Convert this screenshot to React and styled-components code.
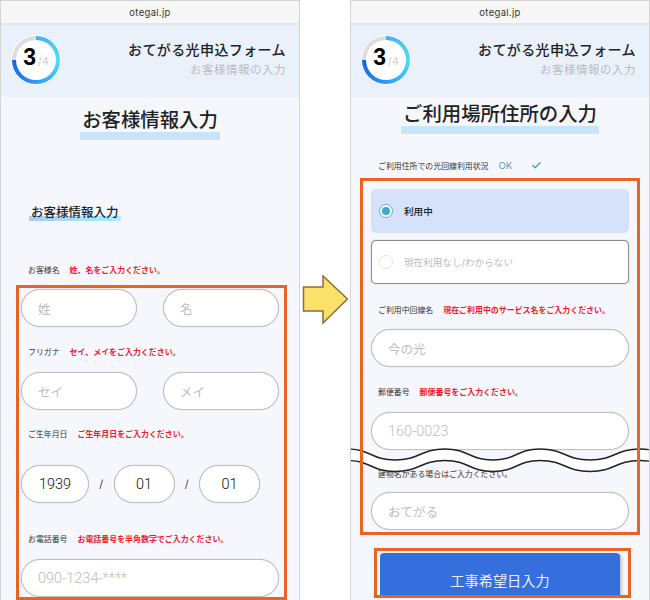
import React from "react";
import styled, { createGlobalStyle } from "styled-components";
import { Check } from "lucide-react";

const GlobalStyle = createGlobalStyle`
  html, body {
    margin: 0;
    padding: 0;
    background: #fff;
  }
  * {
    box-sizing: border-box;
  }
`;

const FONT = `Inter, "Noto Sans CJK JP", sans-serif`;

const Page = styled.div`
  width: 650px;
  height: 600px;
  display: flex;
  align-items: center;
  overflow: hidden;
  font-family: ${FONT};
  color: #222;
`;

const Phone = styled.div`
  position: relative;
  width: 300px;
  height: 600px;
  flex: none;
  overflow: hidden;
  background: #f6f7fc;
  border: 1px solid #d4d4d4;
  border-bottom: 0;
`;

const ArrowColumn = styled.div`
  width: 50px;
  flex: none;
  display: flex;
  justify-content: center;
`;

const BrowserBar = styled.div`
  height: 24px;
  display: flex;
  align-items: center;
  justify-content: center;
  background: #f7f7f7;
  border-bottom: 2px solid #e1e5ec;
  font-size: 9.5px;
  letter-spacing: 0.3px;
  color: #333;
`;

const Header = styled.header`
  height: 72px;
  padding: 10px 13px 0 10px;
  display: flex;
  justify-content: space-between;
  background: #eaf1fb;
`;

const Ring = styled.div`
  width: 50px;
  height: 50px;
  padding: 4px;
  border-radius: 50%;
  display: flex;
  background: conic-gradient(
    #4aaef2 0%,
    #50dcff 25%,
    #2f9af5 50%,
    #1261ea 75%,
    #dedede 75%,
    #dedede 100%
  );
  border: 1px solid #fff;
`;

const RingInner = styled.div`
  flex: 1;
  border-radius: 50%;
  background: #fff;
  display: flex;
  align-items: baseline;
  justify-content: center;
  line-height: 35px;
`;

const RingNumber = styled.span`
  font-family: "Liberation Sans", sans-serif;
  font-size: 23px;
  font-weight: 700;
  color: #000;
`;

const RingTotal = styled.span`
  font-size: 10.5px;
  color: #ccc;
  margin-left: 2px;
`;

const HeaderText = styled.div`
  text-align: right;
  padding-top: 5px;
`;

const FormName = styled.div`
  font-size: 14px;
  font-weight: 500;
  line-height: 20px;
  letter-spacing: 0.4px;
`;

const StepName = styled.div`
  font-size: 11.5px;
  line-height: 20px;
  letter-spacing: 0.5px;
  color: #bcbcbc;
`;

const TitleRow = styled.div`
  display: flex;
  justify-content: center;
  margin-top: ${(p) => p.$top}px;
`;

const Title = styled.h1`
  margin: 0;
  padding: 0 2px;
  font-size: 19.4px;
  font-weight: 500;
  line-height: 24px;
  border-bottom: 8px solid #c8e4fb;
`;

const SectionHead = styled.h2`
  margin: 64px 0 0 28px;
  width: fit-content;
  padding: 0 2px;
  font-size: 12.5px;
  font-weight: 500;
  line-height: 17px;
  background: linear-gradient(to right, #a8cdf5, #a5effc) no-repeat bottom / 100% 5px;
`;

const LabelRow = styled.div`
  height: 12px;
  padding-bottom: 2px;
  display: flex;
  align-items: center;
  gap: 10px;
  margin: ${(p) => p.$top || 0}px 0 ${(p) => p.$bottom || 0}px ${(p) => p.$left || 0}px;
  font-size: 7.9px;
  white-space: nowrap;
  color: #333;
`;

const ErrorText = styled.span`
  font-size: 7.95px;
  font-weight: 700;
  color: #f0202c;
`;

const StatusOk = styled.span`
  font-size: 9.5px;
  color: #3aa5d0;
`;

const StatusCheck = styled(Check)`
  margin-left: 9px;
  color: #3aa5d0;
`;

// the orange frame sits above the wave, the fields below it
const Highlight = styled.div`
  position: relative;

  &::after {
    content: "";
    position: absolute;
    inset: 0;
    z-index: 2;
    border: 3px solid #e8641f;
    pointer-events: none;
  }
`;

const LeftHighlight = styled(Highlight)`
  width: 271px;
  height: 315px;
  margin: 9px 0 0 15px;
  padding: 4px 8px 0 5px;
`;

const RightHighlight = styled(Highlight)`
  width: 280px;
  margin: 6px 0 0 9px;
  padding: 11px 11px 5px;
`;

const ButtonHighlight = styled(Highlight)`
  width: 257px;
  height: 50px;
  margin: 13px 0 0 23px;
  padding: 5px 11px 0 6px;
  overflow: hidden;
`;

const InputRow = styled.div`
  display: flex;
  align-items: center;
`;

const TextInput = styled.input`
  display: block;
  width: ${(p) => p.$width || "100%"};
  height: 38px;
  flex: none;
  padding: 0 16px;
  border: 1px solid #bebebe;
  box-shadow: 0 0 1px #c4c4c4;
  border-radius: 19px;
  background: #fff;
  outline: none;
  font-family: ${(p) => (p.$latin ? "Roboto, sans-serif" : `"Noto Sans CJK JP", sans-serif`)};
  font-weight: ${(p) => (p.$latin ? 300 : 400)};
  font-size: ${(p) => (p.$latin ? "14.5px" : "12.5px")};
  color: #111;
  text-align: ${(p) => p.$align || "left"};

  &::placeholder {
    color: #bdbdbd;
    opacity: 1;
  }
`;

const NameGap = styled.div`
  width: 26px;
  flex: none;
`;

const DateSlash = styled.span`
  width: 24.5px;
  flex: none;
  text-align: center;
  font-size: 11px;
  color: #444;
`;

const RadioOption = styled.div`
  height: 44px;
  margin-bottom: ${(p) => p.$bottom || 0}px;
  padding-left: ${(p) => (p.$active ? 8 : 7)}px;
  display: flex;
  align-items: center;
  gap: 11px;
  border-radius: 5px;
  background: ${(p) => (p.$active ? "#d5e2f9" : "#fff")};
  border: ${(p) => (p.$active ? "0" : "1px solid #8e8e8e")};
  box-shadow: ${(p) => (p.$active ? "none" : "0 0 1px #8e8e8e")};
  font-size: 9.6px;
  font-weight: ${(p) => (p.$active ? 500 : 400)};
  color: ${(p) => (p.$active ? "#222" : "#bbb")};
`;

const RadioMark = styled.span`
  width: 14px;
  height: 14px;
  flex: none;
  border-radius: 50%;
  background: #fff;
  border: 1px solid ${(p) => (p.$active ? "#58b6d6" : "#e2e2e2")};
  display: flex;
  align-items: center;
  justify-content: center;

  &::after {
    content: "";
    width: 8px;
    height: 8px;
    border-radius: 50%;
    background: ${(p) => (p.$active ? "#3fa9c9" : "transparent")};
  }
`;

const SubmitButton = styled.button`
  display: block;
  width: 240px;
  height: 54px;
  padding: 0;
  border: 0;
  border-radius: 4px;
  background: #356fde;
  box-shadow: 2px 1px 3px rgba(0, 0, 0, 0.2);
  font-family: ${FONT};
  font-size: 14.2px;
  color: #e8eefc;
`;

const WaveLayer = styled.svg`
  position: absolute;
  top: 446px;
  left: 0;
  z-index: 1;
  display: block;
`;

// crest and trough x positions of the cut mark
const WAVE_X = [-4, 44, 94, 142, 189, 239, 289, 337];

const waveTop = (i, y) => y + (i % 2 === 0 ? 2 : 13);

const forward = (y) =>
  WAVE_X.map((x, i) => {
    if (i === 0) return `M${x},${waveTop(0, y)}`;
    const prev = WAVE_X[i - 1];
    const mid = (prev + x) / 2;
    return `C${mid},${waveTop(i - 1, y)} ${mid},${waveTop(i, y)} ${x},${waveTop(i, y)}`;
  }).join(" ");

const backward = (y) => {
  const last = WAVE_X.length - 1;
  const parts = [`L${WAVE_X[last]},${waveTop(last, y)}`];
  for (let i = last - 1; i >= 0; i--) {
    const mid = (WAVE_X[i + 1] + WAVE_X[i]) / 2;
    parts.push(`C${mid},${waveTop(i + 1, y)} ${mid},${waveTop(i, y)} ${WAVE_X[i]},${waveTop(i, y)}`);
  }
  return parts.join(" ") + " Z";
};

const Wave = () => (
  <WaveLayer width="300" height="28" viewBox="0 0 300 28">
    <path d={`${forward(0)} ${backward(11.5)}`} fill="#fff" />
    <path d={forward(0)} fill="none" stroke="#222" strokeWidth="1.4" />
    <path d={forward(11.5)} fill="none" stroke="#222" strokeWidth="1.4" />
  </WaveLayer>
);

const NextArrow = () => (
  <svg width="46" height="50" viewBox="0 0 46 50">
    <path
      d="M1.5,12 H21 V1 L45.5,24 L21,48 V36 H1.5 Z"
      fill="#fbe06a"
      stroke="#8d6a3f"
      strokeWidth="1.5"
    />
  </svg>
);

const PhoneTop = () => (
  <>
    <BrowserBar>otegal.jp</BrowserBar>
    <Header>
      <Ring>
        <RingInner>
          <RingNumber>3</RingNumber>
          <RingTotal>/4</RingTotal>
        </RingInner>
      </Ring>
      <HeaderText>
        <FormName>おてがる光申込フォーム</FormName>
        <StepName>お客様情報の入力</StepName>
      </HeaderText>
    </Header>
  </>
);

export default function App() {
  return (
    <Page>
      <GlobalStyle />
      <Phone>
        <PhoneTop />
        <TitleRow $top={11}>
          <Title>お客様情報入力</Title>
        </TitleRow>
        <SectionHead>お客様情報入力</SectionHead>
        <LabelRow $top={43} $left={27}>
          お客様名<ErrorText>姓、名をご入力ください。</ErrorText>
        </LabelRow>
        <LeftHighlight>
          <InputRow>
            <TextInput $width="116px" placeholder="姓" readOnly />
            <NameGap />
            <TextInput $width="116px" placeholder="名" readOnly />
          </InputRow>
          <LabelRow $top={19} $bottom={14} $left={7}>
            フリガナ<ErrorText>セイ、メイをご入力ください。</ErrorText>
          </LabelRow>
          <InputRow>
            <TextInput $width="116px" placeholder="セイ" readOnly />
            <NameGap />
            <TextInput $width="116px" placeholder="メイ" readOnly />
          </InputRow>
          <LabelRow $top={18} $bottom={25} $left={7}>
            ご生年月日<ErrorText>ご生年月日をご入力ください。</ErrorText>
          </LabelRow>
          <InputRow>
            <TextInput $width="68px" $align="center" $latin defaultValue="1939" readOnly />
            <DateSlash>/</DateSlash>
            <TextInput $width="61px" $align="center" $latin defaultValue="01" readOnly />
            <DateSlash>/</DateSlash>
            <TextInput $width="61px" $align="center" $latin defaultValue="01" readOnly />
          </InputRow>
          <LabelRow $top={30} $bottom={14} $left={7}>
            お電話番号<ErrorText>お電話番号を半角数字でご入力ください。</ErrorText>
          </LabelRow>
          <TextInput $latin placeholder="090-1234-****" readOnly />
        </LeftHighlight>
      </Phone>

      <ArrowColumn>
        <NextArrow />
      </ArrowColumn>

      <Phone>
        <PhoneTop />
        <TitleRow $top={5}>
          <Title>ご利用場所住所の入力</Title>
        </TitleRow>
        <LabelRow $top={26} $left={27}>
          ご利用住所での光回線利用状況
          <StatusOk>OK</StatusOk>
          <StatusCheck size={11} strokeWidth={3} />
        </LabelRow>
        <RightHighlight>
          <RadioOption $active $bottom={7}>
            <RadioMark $active />
            利用中
          </RadioOption>
          <RadioOption>
            <RadioMark />
            現在利用なし/わからない
          </RadioOption>
          <LabelRow $top={20} $bottom={13} $left={7}>
            ご利用中回線名<ErrorText>現在ご利用中のサービス名をご入力ください。</ErrorText>
          </LabelRow>
          <TextInput placeholder="今の光" readOnly />
          <LabelRow $top={19} $bottom={14} $left={7}>
            郵便番号<ErrorText>郵便番号をご入力ください。</ErrorText>
          </LabelRow>
          <TextInput $latin placeholder="160-0023" readOnly />
          <LabelRow $top={18} $bottom={12} $left={7}>
            建物名がある場合はご入力ください。
          </LabelRow>
          <TextInput placeholder="おてがる" readOnly />
        </RightHighlight>
        <ButtonHighlight>
          <SubmitButton>工事希望日入力</SubmitButton>
        </ButtonHighlight>
        <Wave />
      </Phone>
    </Page>
  );
}
